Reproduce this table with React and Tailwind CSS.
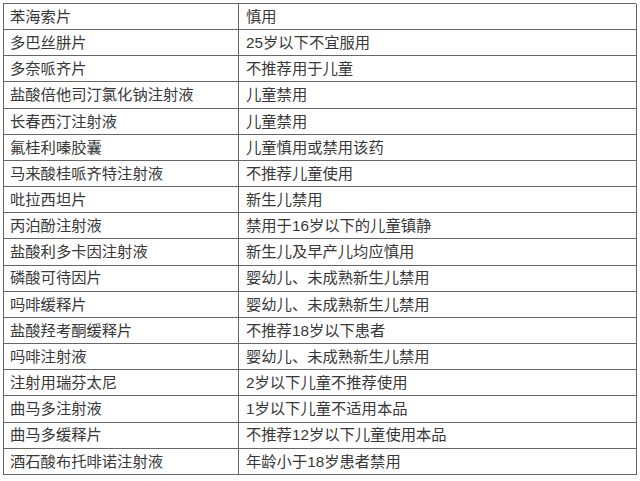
import React from 'react';

const rows = [
  ['苯海索片', '慎用'],
  ['多巴丝肼片', '25岁以下不宜服用'],
  ['多奈哌齐片', '不推荐用于儿童'],
  ['盐酸倍他司汀氯化钠注射液', '儿童禁用'],
  ['长春西汀注射液', '儿童禁用'],
  ['氟桂利嗪胶囊', '儿童慎用或禁用该药'],
  ['马来酸桂哌齐特注射液', '不推荐儿童使用'],
  ['吡拉西坦片', '新生儿禁用'],
  ['丙泊酚注射液', '禁用于16岁以下的儿童镇静'],
  ['盐酸利多卡因注射液', '新生儿及早产儿均应慎用'],
  ['磷酸可待因片', '婴幼儿、未成熟新生儿禁用'],
  ['吗啡缓释片', '婴幼儿、未成熟新生儿禁用'],
  ['盐酸羟考酮缓释片', '不推荐18岁以下患者'],
  ['吗啡注射液', '婴幼儿、未成熟新生儿禁用'],
  ['注射用瑞芬太尼', '2岁以下儿童不推荐使用'],
  ['曲马多注射液', '1岁以下儿童不适用本品'],
  ['曲马多缓释片', '不推荐12岁以下儿童使用本品'],
  ['酒石酸布托啡诺注射液', '年龄小于18岁患者禁用'],
];

export default function App() {
  return (
    <div
      className="w-[640px] h-[481px] bg-white pt-[3px] pl-[3px] overflow-hidden"
      style={{ fontFamily: '"Helvetica Neue", "Liberation Sans", "Noto Sans CJK SC", sans-serif' }}
    >
      {/* 两列药品表 */}
      <div className="grid grid-cols-[235px_398px] auto-rows-[26.17px] w-[633px] border-t border-l border-[#666] text-[15.3px] text-[#383838] leading-none">
        {rows.map(([name, note]) => (
          <React.Fragment key={name}>
            <div className="flex items-center border-r border-b border-[#666] pl-[6px]">{name}</div>
            <div className="flex items-center border-r border-b border-[#666] pl-[7px]">{note}</div>
          </React.Fragment>
        ))}
      </div>
    </div>
  );
}
